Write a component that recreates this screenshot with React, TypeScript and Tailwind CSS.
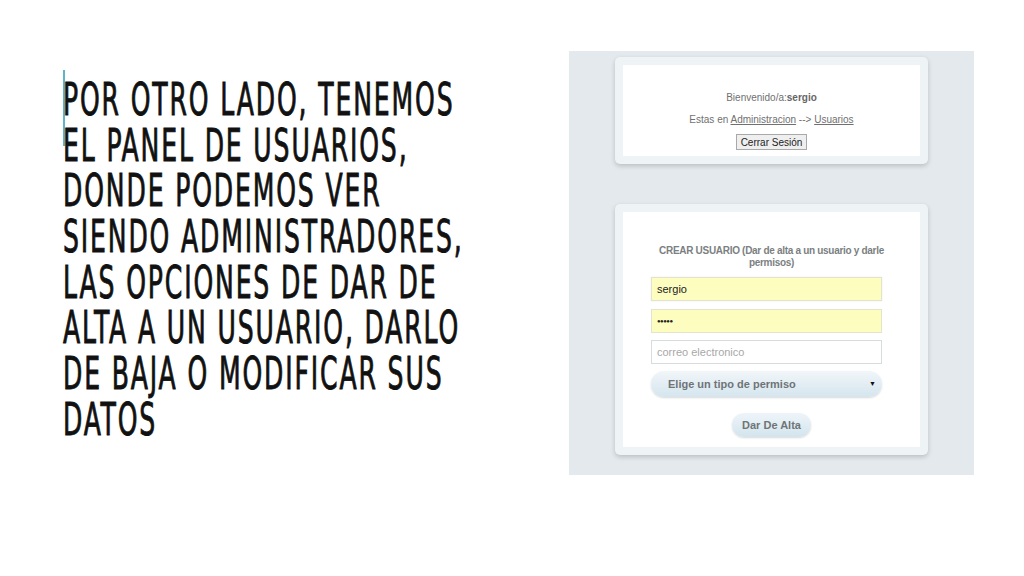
import React from 'react';

const lines = [
  'POR OTRO LADO, TENEMOS',
  'EL PANEL DE USUARIOS,',
  'DONDE PODEMOS VER',
  'SIENDO ADMINISTRADORES,',
  'LAS OPCIONES DE DAR DE',
  'ALTA A UN USUARIO, DARLO',
  'DE BAJA O MODIFICAR SUS',
  'DATOS',
];

function Card({ children, h }: { children: React.ReactNode; h: string }) {
  return (
    <div className={`mx-auto w-[313px] ${h} rounded-[5px] bg-[#eef3f5] p-[8px] shadow-[0_2px_5px_rgba(0,0,0,0.18)]`}>
      <div className="h-full bg-white">{children}</div>
    </div>
  );
}

export default function App() {
  return (
    <div className="relative flex h-[576px] w-[1024px] overflow-hidden bg-white">
      <div className="absolute left-[63px] top-[70px] h-[76px] w-[2px] bg-[#5fb4c9]" />

      <div className="w-[569px] pl-[63px] pt-[77px]">
        {lines.map((l) => (
          <div
            key={l}
            className="h-[45.7px] origin-left scale-x-[0.62] whitespace-nowrap text-[45px] leading-[45.7px] font-normal tracking-[3px] text-[#111]"
            style={{ fontFamily: '"DejaVu Sans Condensed", "DejaVu Sans", sans-serif', WebkitTextStroke: '0.9px #111' }}
          >
            {l}
          </div>
        ))}
      </div>

      <div
        className="mt-[51px] h-[424px] w-[405px] bg-[#e3e9ec] pt-[6px] text-[10px] text-[#707070]"
        style={{ fontFamily: '"Liberation Sans", Arial, sans-serif' }}
      >
        <Card h="h-[107px]">
          <div className="flex flex-col items-center pt-[26px]">
            <div className="h-[14px] leading-[14px]">
              Bienvenido/a:<b className="text-[#666]">sergio</b>
            </div>
            <div className="mt-[8px] h-[14px] leading-[14px]">
              Estas en <span className="underline">Administracion</span> --&gt; <span className="underline">Usuarios</span>
            </div>
            <button className="mt-[7px] h-[16px] border border-[#a9a9a9] bg-[#efefef] px-[4px] text-[10px] leading-[13px] text-[#222]">
              Cerrar Sesión
            </button>
          </div>
        </Card>

        <div className="h-[40px]" />

        <Card h="h-[251px]">
          <div className="flex flex-col pt-[33px]">
            <div className="mx-auto w-[250px] text-center text-[10px] leading-[12px] font-bold tracking-[-0.3px] text-[#7b7f82]">
              CREAR USUARIO (Dar de alta a un usuario y darle permisos)
            </div>
            <div className="ml-[28px] mt-[8px] flex h-[24px] w-[231px] items-center border border-[#e2e5cc] bg-[#fdfdbf] px-[5px] text-[11px] text-[#222] shadow-[0_0_2px_rgba(0,0,0,0.08)]">
              sergio
            </div>
            <div className="ml-[28px] mt-[8px] flex h-[24px] w-[231px] items-center border border-[#e2e5cc] bg-[#fdfdbf] px-[5px] text-[6px] tracking-[-0.5px] text-[#222]">
              ●●●●●
            </div>
            <div className="ml-[28px] mt-[7px] flex h-[24px] w-[231px] items-center border border-[#d7dcde] bg-white px-[5px] text-[11px] text-[#a8a8a8]">
              correo electronico
            </div>
            <div className="ml-[28px] mt-[7px] flex h-[26px] w-[231px] items-center justify-between rounded-full bg-gradient-to-b from-[#f1f6f9] to-[#d5e5ee] pl-[17px] pr-[6px] text-[11px] font-bold text-[#6f7477] shadow-[0_1px_2px_rgba(0,0,0,0.15)]">
              <span>Elige un tipo de permiso</span>
              <span className="text-[7px] text-[#111]">▼</span>
            </div>
            <button className="mx-auto mt-[16px] h-[24px] w-[79px] rounded-full bg-gradient-to-b from-[#eef5f9] to-[#d3e4ed] text-[11px] font-bold text-[#6f7477] shadow-[0_1px_2px_rgba(0,0,0,0.15)]">
              Dar De Alta
            </button>
          </div>
        </Card>
      </div>
    </div>
  );
}
